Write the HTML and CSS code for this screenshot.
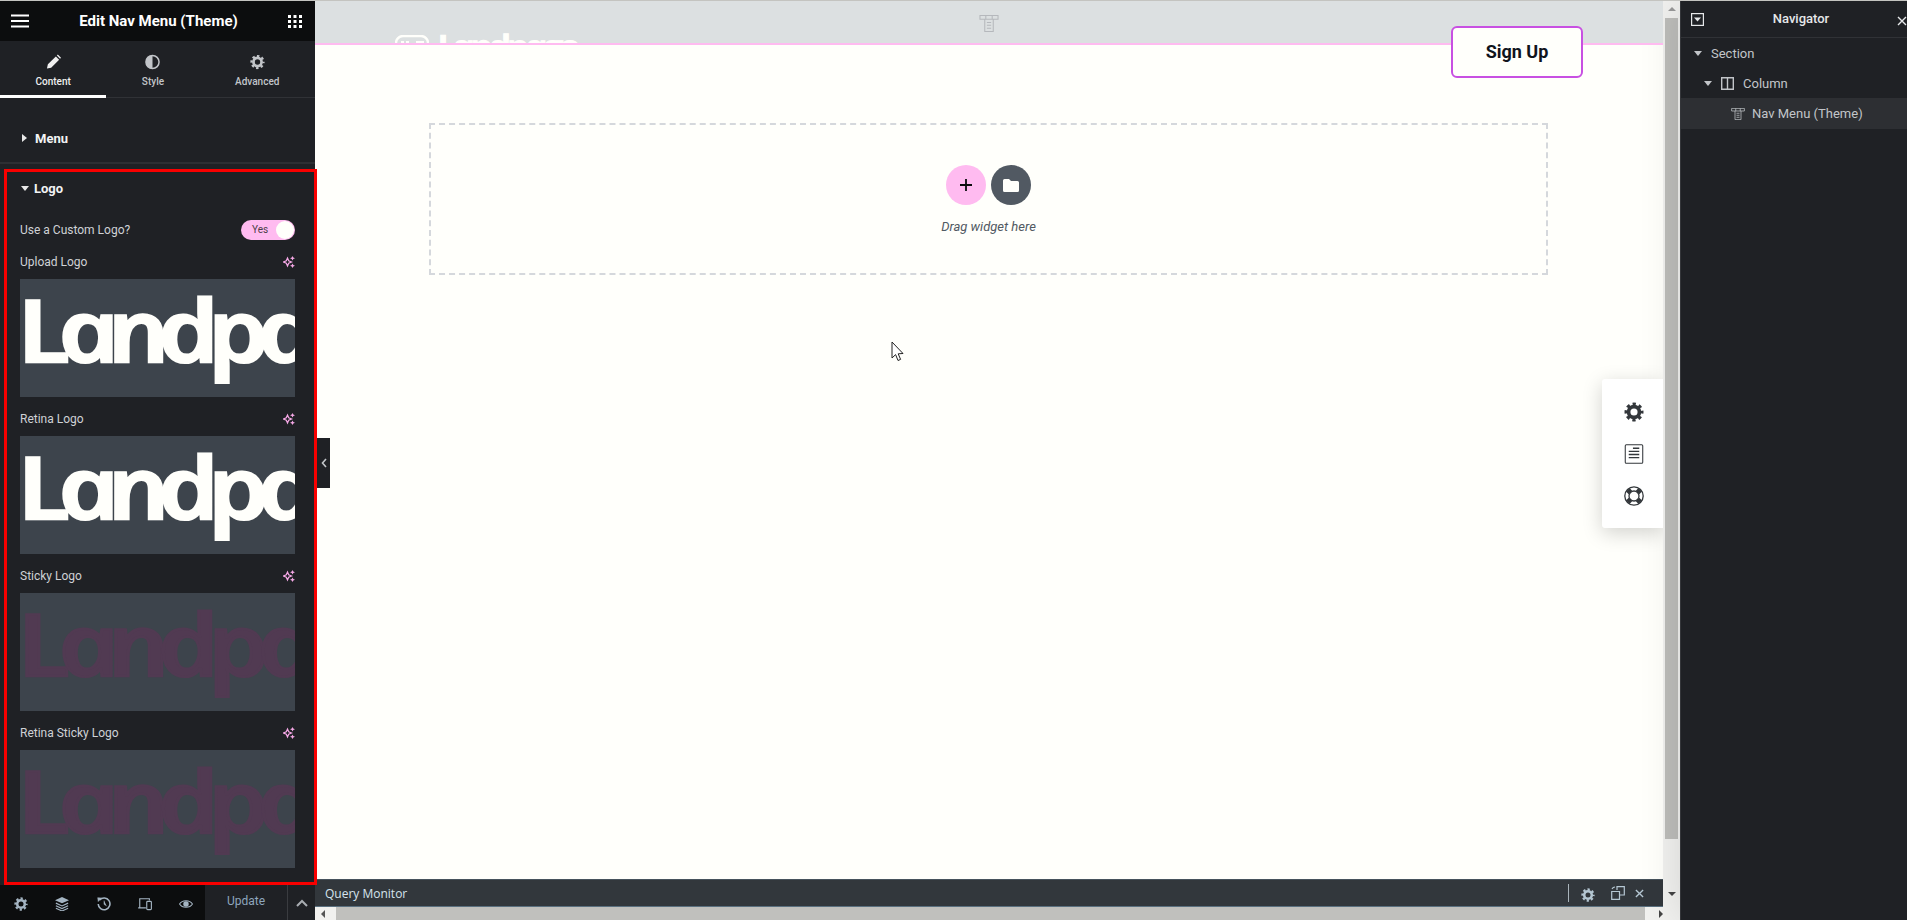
FILE: index.html
```html
<!DOCTYPE html>
<html lang="en">

<head>
    <meta charset="UTF-8">
    <meta name="viewport" content="width=device-width, initial-scale=1.0">
    <title>Edit Nav Menu (Theme)</title>
    <link rel="stylesheet" href="styles.css">
</head>

<body>

    <!-- shared icons -->
    <svg class="sprite" width="0" height="0">
        <symbol id="gear" viewBox="0 0 24 24">
            <circle cx="12" cy="12" r="6.5" fill="none" stroke="currentColor" stroke-width="4.4"></circle>
            <circle cx="12" cy="12" r="9.6" fill="none" stroke="currentColor" stroke-width="3.6" stroke-dasharray="3.9 3.64" stroke-dashoffset="2"></circle>
        </symbol>
        <symbol id="sparkle" viewBox="0 0 12 12">
            <path d="M4.500 2 L5.700 4.800 L8.500 6 L5.700 7.200 L4.500 10 L3.300 7.200 L.5 6 L3.300 4.800 Z" fill="none" stroke="currentColor" stroke-width="1.200"></path>
            <path d="M9.500 0 L10.300 1.600 L12 2.300 L10.300 3 L9.500 4.600 L8.700 3 L7 2.300 L8.700 1.600 Z M9.500 7.400 L10.300 9 L12 9.700 L10.300 10.400 L9.500 12 L8.700 10.400 L7 9.700 L8.700 9 Z" fill="currentColor"></path>
        </symbol>
        <symbol id="nav-menu" viewBox="0 0 18 16">
            <path d="M.5 .5 H17.5 V4 H.5 Z M6 .5 V4 M12 .5 V4 M5 4 V15.5 H13 V4 M7 7 H11 M7 9.7 H11 M7 12.4 H11" fill="none" stroke="currentColor" stroke-width="1"></path>
        </symbol>
    </svg>

    <div class="app">

        <aside class="panel">
            <header class="panel-top">
                <svg class="top-icon" viewBox="0 0 18 14"><path d="M0 1.5 H18 M0 7 H18 M0 12.5 H18" stroke="currentColor" stroke-width="2.2"></path></svg>
                <h1>Edit Nav Menu (Theme)</h1>
                <svg class="top-icon grid-icon" viewBox="0 0 14 13"><path d="M0 0 H3 V3 H0 Z M5.5 0 H8.5 V3 H5.5 Z M11 0 H14 V3 H11 Z M0 5 H3 V8 H0 Z M5.5 5 H8.5 V8 H5.5 Z M11 5 H14 V8 H11 Z M0 10 H3 V13 H0 Z M5.5 10 H8.5 V13 H5.5 Z M11 10 H14 V13 H11 Z" fill="currentColor"></path></svg>
            </header>

            <nav class="tabs">
                <div class="tab active">
                    <svg viewBox="0 0 16 16"><path d="M1 15 L2 10.5 L10.5 2 L14 5.5 L5.5 14 Z M11.6 1 L12.6 0 L16 3.4 L15 4.4 Z" fill="currentColor"></path></svg>
                    <span>Content</span>
                </div>
                <div class="tab">
                    <svg viewBox="0 0 16 16"><circle cx="8" cy="8" r="7" fill="none" stroke="currentColor" stroke-width="1.6"></circle><path d="M8 1 A7 7 0 0 0 8 15 Z" fill="currentColor"></path></svg>
                    <span>Style</span>
                </div>
                <div class="tab">
                    <svg viewBox="0 0 24 24"><use href="#gear"></use></svg>
                    <span>Advanced</span>
                </div>
            </nav>

            <div class="section-title closed"><i class="caret-right"></i>Menu</div>

            <section class="logo-section">
                <div class="section-title"><i class="caret-down"></i>Logo</div>

                <div class="control-row switch-row">
                    <span>Use a Custom Logo?</span>
                    <div class="switch"><span>Yes</span><i></i></div>
                </div>

                <div class="control-row"><span>Upload Logo</span><svg class="ai"><use href="#sparkle"></use></svg></div>
                <div class="logo-preview"><span>Landpage</span></div>

                <div class="control-row"><span>Retina Logo</span><svg class="ai"><use href="#sparkle"></use></svg></div>
                <div class="logo-preview"><span>Landpage</span></div>

                <div class="control-row"><span>Sticky Logo</span><svg class="ai"><use href="#sparkle"></use></svg></div>
                <div class="logo-preview sticky"><span>Landpage</span></div>

                <div class="control-row"><span>Retina Sticky Logo</span><svg class="ai"><use href="#sparkle"></use></svg></div>
                <div class="logo-preview sticky"><span>Landpage</span></div>
            </section>

            <footer class="panel-footer">
                <div class="footer-icons">
                    <svg viewBox="0 0 24 24"><use href="#gear"></use></svg>
                    <svg viewBox="0 0 16 16"><path d="M8 0 L16 3.6 L8 7.2 L0 3.6 Z" fill="currentColor"></path><path d="M1 7 L8 10.2 L15 7 M1 10 L8 13.2 L15 10 M1 12.8 L8 16 L15 12.8" fill="none" stroke="currentColor" stroke-width="1.3"></path></svg>
                    <svg viewBox="0 0 16 16"><path d="M3 3.5 A6.7 6.7 0 1 1 1.4 8" fill="none" stroke="currentColor" stroke-width="1.8"></path><path d="M.8 .8 L5.2 1.2 L1.4 5.2 Z M8 4 V8.4 L11 10.2" fill="currentColor" stroke="currentColor" stroke-width=".6"></path></svg>
                    <svg viewBox="0 0 16 14"><path d="M2 11 V1 H13 V3 M.2 11.5 H9" fill="none" stroke="currentColor" stroke-width="1.3"></path><rect x="10" y="4" width="5.3" height="9.4" rx="1" fill="none" stroke="currentColor" stroke-width="1.3"></rect></svg>
                    <svg viewBox="0 0 18 12"><path d="M.7 6 C4 .4 14 .4 17.3 6 C14 11.6 4 11.6 .7 6 Z" fill="none" stroke="currentColor" stroke-width="1.3"></path><circle cx="9" cy="6" r="3.5" fill="currentColor"></circle></svg>
                </div>
                <div class="update-btn">Update</div>
                <div class="update-more"><svg viewBox="0 0 12 8"><path d="M1 7 L6 2 L11 7" fill="none" stroke="currentColor" stroke-width="2"></path></svg></div>
            </footer>

            <div class="red-outline"></div>
            <div class="collapse-tab"><svg viewBox="0 0 6 10"><path d="M5 1 L1.5 5 L5 9" fill="none" stroke="currentColor" stroke-width="1.6"></path></svg></div>
        </aside>

        <main class="center">
            <div class="stage">
                <div class="site">
                    <div class="site-header">
                        <div class="site-logo">
                            <svg viewBox="0 0 34 25"><rect x="1" y="1" width="32" height="30" rx="7" fill="none" stroke="currentColor" stroke-width="2.400"></rect><path d="M6 6 H9 V9.500 H6 Z M11 6 H14 V9.500 H11 Z M21 6 H29 V9.500 H21 Z" fill="currentColor"></path></svg>
                            <span>Landpage</span>
                        </div>
                        <svg class="widget-handle"><use href="#nav-menu"></use></svg>
                    </div>

                    <a class="signup">Sign Up</a>

                    <div class="drop-area">
                        <div class="drop-buttons">
                            <div class="round-btn add"><svg viewBox="0 0 12 12"><path d="M6 0 V12 M0 6 H12" stroke="currentColor" stroke-width="1.8"></path></svg></div>
                            <div class="round-btn folder"><svg viewBox="0 0 16 13"><path d="M0 1.500 Q0 0 1.500 0 H6 L8 2 H14.500 Q16 2 16 3.500 V11.500 Q16 13 14.500 13 H1.500 Q0 13 0 11.500 Z" fill="currentColor"></path></svg></div>
                        </div>
                        <p>Drag widget here</p>
                    </div>

                    <div class="side-tools">
                        <svg viewBox="0 0 24 24"><use href="#gear"></use></svg>
                        <svg viewBox="0 0 18 19"><rect x=".7" y=".7" width="16.600" height="17.600" rx="1" fill="none" stroke="currentColor" stroke-width="1"></rect><path d="M8 4 H14 M4 7 H14 M4 10 H14 M4 13 H14" stroke="currentColor" stroke-width="1.300"></path></svg>
                        <svg viewBox="0 0 20 20"><circle cx="10" cy="10" r="9.200" fill="none" stroke="currentColor" stroke-width="1.300"></circle><circle cx="10" cy="10" r="5" fill="none" stroke="currentColor" stroke-width="1.300"></circle><path d="M3.800 3.800 L6.400 6.400 M16.200 3.800 L13.600 6.400 M3.800 16.200 L6.400 13.600 M16.200 16.200 L13.600 13.600" stroke="currentColor" stroke-width="5"></path></svg>
                    </div>

                    <svg class="cursor" viewBox="0 0 13 21"><path d="M1 1 V17 L4.600 13.600 L7 19.500 L9.600 18.400 L7.200 12.800 L12 12.500 Z" fill="#fff" stroke="#222" stroke-width="1"></path></svg>
                </div>

                <div class="query-monitor">
                    <span>Query Monitor</span>
                    <div class="qm-icons">
                        <i class="qm-sep"></i>
                        <svg class="qm-gear" viewBox="0 0 24 24"><use href="#gear"></use></svg>
                        <svg class="qm-pop" viewBox="0 0 14 14"><path d="M6 4 V.7 H13.300 V9 H9 M.7 5.500 H8.500 V13.300 H.7 Z M1 3 Q2 1 4 1" fill="none" stroke="currentColor" stroke-width="1.200"></path></svg>
                        <svg class="qm-close" viewBox="0 0 10 10"><path d="M1 1 L9 9 M9 1 L1 9" stroke="currentColor" stroke-width="1.500"></path></svg>
                    </div>
                </div>

                <div class="h-scroll">
                    <i class="arrow-left"></i>
                    <div class="h-thumb"></div>
                    <i class="arrow-right"></i>
                </div>
            </div>

            <div class="v-scroll">
                <i class="arrow-up"></i>
                <div class="v-thumb"></div>
                <i class="arrow-down"></i>
            </div>
        </main>

        <aside class="navigator">
            <header class="nav-head">
                <svg class="nav-toggle" viewBox="0 0 13 13"><rect x=".6" y=".6" width="11.800" height="11.800" fill="none" stroke="currentColor" stroke-width="1.200"></rect><path d="M3 4.500 H10 L6.500 8.500 Z" fill="currentColor"></path></svg>
                <span>Navigator</span>
                <svg class="nav-close" viewBox="0 0 10 10"><path d="M1 1 L9 9 M9 1 L1 9" stroke="currentColor" stroke-width="1.400"></path></svg>
            </header>
            <div class="nav-row level-0"><i class="caret-down"></i><span>Section</span></div>
            <div class="nav-row level-1">
                <i class="caret-down"></i>
                <svg class="col-icon" viewBox="0 0 13 13"><path d="M.7 .7 H12.300 V12.300 H.7 Z M6.500 .7 V12.300" fill="none" stroke="currentColor" stroke-width="1.400"></path></svg>
                <span>Column</span>
            </div>
            <div class="nav-row level-2 selected">
                <svg class="menu-icon"><use href="#nav-menu"></use></svg>
                <span>Nav Menu (Theme)</span>
            </div>
        </aside>

    </div>

</body>

</html>
```

FILE: styles.css
```css
* {
    box-sizing: border-box;
}

html,
body {
    margin: 0;
    height: 100%;
    overflow: hidden;
}

body {
    font-family: Roboto, Arial, sans-serif;
    background-color: #fffffb;
    border-top: 1px solid #c4c4c0;
}

.sprite {
    position: absolute;
}

.app {
    display: flex;
    height: 919px;
}

/* left panel */

.panel {
    position: relative;
    flex: none;
    width: 315px;
    display: flex;
    flex-direction: column;
    background-color: #1f2125;
    color: #d5d8dc;
}

.panel-top {
    height: 40px;
    display: flex;
    align-items: center;
    justify-content: space-between;
    padding: 0 13px 0 11px;
    background-color: #0c0d0e;
    color: #fff;
}

.panel-top h1 {
    margin: 0;
    font-size: 15px;
    font-weight: 700;
}

.top-icon {
    width: 18px;
    height: 14px;
}

.grid-icon {
    width: 14px;
    height: 13px;
}

.tabs {
    height: 57px;
    display: flex;
    border-bottom: 1px solid #303236;
}

.tab {
    display: flex;
    flex-direction: column;
    align-items: center;
    padding: 13px 35.500px 0;
    font-size: 10px;
    font-weight: 500;
    color: #c2c5c9;
    border-bottom: 3px solid transparent;
    margin-bottom: -1px;
}

.tab svg {
    width: 15px;
    height: 16px;
    margin-bottom: 6px;
}

.tab.active {
    color: #f0f0f0;
    border-bottom-color: #fff;
}

.section-title {
    display: flex;
    align-items: center;
    height: 48px;
    padding-left: 21px;
    font-size: 13px;
    font-weight: 700;
    color: #f2f3f4;
}

.section-title.closed {
    height: 66px;
    padding-top: 16px;
    border-bottom: 2px solid #2d2f33;
}

.caret-right {
    width: 0;
    height: 0;
    margin-right: 8px;
    margin-left: 1px;
    border-left: 5px solid #e8e8e8;
    border-top: 4px solid transparent;
    border-bottom: 4px solid transparent;
}

.caret-down {
    width: 0;
    height: 0;
    margin-right: 5px;
    border-top: 5px solid #e8e8e8;
    border-left: 4.500px solid transparent;
    border-right: 4.500px solid transparent;
}

.logo-section {
    flex: 1;
}

.control-row {
    display: flex;
    align-items: center;
    justify-content: space-between;
    height: 16px;
    margin: 14px 20px 9px;
    font-size: 12px;
    color: #cfd2d6;
}

.control-row.switch-row {
    height: 20px;
    margin: 8px 20px 0;
}

.switch {
    position: relative;
    width: 54px;
    height: 20px;
    border-radius: 10px;
    background-color: #ffbbf0;
    color: #4c4048;
    font-size: 10px;
    line-height: 20px;
    padding-left: 11px;
}

.switch i {
    position: absolute;
    top: 1px;
    right: 1px;
    width: 18px;
    height: 18px;
    border-radius: 50%;
    background-color: #fffffb;
}

.ai {
    width: 12px;
    height: 12px;
    color: #f5a8e6;
}

.logo-preview {
    height: 118px;
    margin: 0 20px;
    overflow: hidden;
    background-color: #3d444c;
}

/* the italic gives the single storey "a", skew stands it upright and scale widens it */
.logo-preview span {
    display: block;
    white-space: nowrap;
    font-family: "Open Sans", sans-serif;
    font-style: italic;
    font-size: 86px;
    font-weight: 600;
    letter-spacing: -9.500px;
    line-height: 100px;
    color: #fffffb;
    -webkit-text-stroke: 2.500px;
    transform-origin: 0 70%;
    transform: skewX(14.500deg) scaleX(1.22);
}

.logo-preview.sticky span {
    color: #513a52;
}

.panel-footer {
    height: 35px;
    display: flex;
    align-items: center;
    background-color: #0c0d0e;
    color: #a4b4c2;
}

.footer-icons {
    width: 205px;
    display: flex;
    justify-content: space-between;
    align-items: center;
    padding: 2px 12px 0 14px;
}

.footer-icons svg {
    width: 14px;
    height: 14px;
}

.update-btn {
    width: 83px;
    height: 100%;
    line-height: 33px;
    text-align: center;
    font-size: 12px;
    color: #8ea6bd;
    background-color: #1f2125;
    border-right: 1px solid #3a3c40;
}

.update-more {
    flex: 1;
    height: 100%;
    display: flex;
    align-items: center;
    justify-content: center;
    background-color: #1f2125;
    color: #a9adb2;
}

.update-more svg {
    width: 12px;
    height: 8px;
}

.red-outline {
    position: absolute;
    top: 168px;
    left: 4px;
    width: 313px;
    height: 716px;
    border: 3px solid #f80000;
    pointer-events: none;
}

.collapse-tab {
    position: absolute;
    top: 437px;
    left: 317px;
    width: 13px;
    height: 50px;
    display: flex;
    align-items: center;
    justify-content: center;
    background-color: #1f2125;
    color: #c2c5c9;
}

.collapse-tab svg {
    width: 6px;
    height: 10px;
}

/* canvas */

.center {
    flex: 1;
    display: flex;
    min-width: 0;
}

.stage {
    flex: 1;
    display: flex;
    flex-direction: column;
    min-width: 0;
}

.site {
    position: relative;
    flex: 1;
    overflow: hidden;
}

.site-header {
    position: relative;
    height: 44px;
    overflow: hidden;
    background-color: #dce0e1;
    border-bottom: 2px solid #ffbbf0;
}

.site-logo {
    position: absolute;
    top: 34px;
    left: 80px;
    display: flex;
    align-items: flex-start;
    gap: 9px;
    color: #fffffb;
}

.site-logo svg {
    width: 34px;
    height: 25px;
}

.site-logo span {
    font-family: "Open Sans", sans-serif;
    font-style: italic;
    font-size: 32px;
    font-weight: 600;
    letter-spacing: -3.800px;
    line-height: 30px;
    margin-top: -4px;
    -webkit-text-stroke: 1px;
    transform-origin: 0 70%;
    transform: skewX(14.500deg) scaleX(1.22);
}

.widget-handle {
    position: absolute;
    top: 14px;
    left: 663px;
    width: 22px;
    height: 17px;
    color: #b5b8bc;
}

.signup {
    position: absolute;
    top: 25px;
    left: 1136px;
    width: 132px;
    height: 52px;
    display: flex;
    align-items: center;
    justify-content: center;
    padding-bottom: 2px;
    background-color: #fffffb;
    border: 2px solid #c850e2;
    border-radius: 6px;
    font-size: 18px;
    font-weight: 700;
    color: #10141c;
}

.drop-area {
    height: 152px;
    margin: 78px 115px 0 114px;
    padding-top: 40px;
    border: 2px dashed #d5d8dc;
    text-align: center;
}

.drop-buttons {
    display: flex;
    justify-content: center;
    gap: 5px;
}

.round-btn {
    width: 40px;
    height: 40px;
    border-radius: 50%;
    display: flex;
    align-items: center;
    justify-content: center;
}

.round-btn.add {
    background-color: #ffbbf0;
    color: #0c0d0e;
}

.round-btn.add svg {
    width: 12px;
    height: 12px;
}

.round-btn.folder {
    background-color: #515962;
    color: #fffffb;
}

.round-btn.folder svg {
    width: 16px;
    height: 13px;
}

.drop-area p {
    margin: 14px 0 0;
    font-size: 13px;
    font-style: italic;
    color: #515962;
}

.side-tools {
    position: absolute;
    top: 378px;
    right: 0;
    width: 61px;
    height: 149px;
    display: flex;
    flex-direction: column;
    align-items: center;
    gap: 22px;
    padding: 23px 0 0 2px;
    background-color: #fff;
    border-radius: 3px 0 0 3px;
    box-shadow: 0 5px 20px rgba(0, 0, 0, 0.18);
    color: #33373b;
}

.side-tools svg {
    width: 20px;
    height: 20px;
}

.cursor {
    position: absolute;
    top: 340px;
    left: 576px;
    width: 13px;
    height: 21px;
}

/* query monitor bar */

.query-monitor {
    height: 28px;
    display: flex;
    align-items: center;
    justify-content: space-between;
    padding-left: 10px;
    background-color: #32373c;
    border-top: 1px solid #46525c;
    border-bottom: 1px solid #5a7080;
    font-family: "Open Sans", Arial, sans-serif;
    font-size: 12px;
    color: #d6e4ee;
}

.qm-icons {
    display: flex;
    align-items: center;
    color: #b5c7d3;
    padding-right: 19px;
}

.qm-sep {
    width: 1px;
    height: 18px;
    margin-right: 12px;
    background-color: #a9b4bb;
}

.qm-gear {
    width: 14px;
    height: 14px;
    margin: 3px 16px 0 0;
}

.qm-pop {
    width: 14px;
    height: 14px;
    margin-right: 10px;
}

.qm-close {
    width: 9px;
    height: 9px;
}

.h-scroll {
    height: 13px;
    display: flex;
    align-items: center;
    background-color: #f1f1ef;
}

.h-thumb {
    width: 1309px;
    height: 100%;
    margin: 0 10px 0 11px;
    background-color: #c0c0bd;
}

.arrow-left,
.arrow-right,
.arrow-up,
.arrow-down {
    width: 0;
    height: 0;
    flex: none;
}

.arrow-left {
    margin-left: 6px;
    border-right: 4px solid #555;
    border-top: 4px solid transparent;
    border-bottom: 4px solid transparent;
}

.arrow-right {
    margin-left: 4px;
    border-left: 4px solid #444;
    border-top: 4px solid transparent;
    border-bottom: 4px solid transparent;
}

.v-scroll {
    flex: 0 0 17px;
    display: flex;
    flex-direction: column;
    align-items: center;
    background-color: #f1f1ef;
}

.v-thumb {
    width: 13px;
    height: 821px;
    margin-top: 7px;
    background-color: #bdbdba;
}

.arrow-up {
    margin-top: 6px;
    border-bottom: 4px solid #999;
    border-left: 4px solid transparent;
    border-right: 4px solid transparent;
}

.arrow-down {
    margin-top: 53px;
    border-top: 4px solid #444;
    border-left: 4px solid transparent;
    border-right: 4px solid transparent;
}

/* navigator */

.navigator {
    flex: 0 0 227px;
    overflow: hidden;
    background-color: #1f2125;
    border-left: 1px solid #34363a;
    color: #c2c5c9;
    font-size: 13px;
    box-shadow: 0 0 40px rgba(0, 0, 0, 0.12);
}

.nav-head {
    position: relative;
    height: 37px;
    display: flex;
    align-items: center;
    justify-content: center;
    padding: 0 0 2px 14px;
    border-bottom: 1px solid #303236;
    color: #e6e8ea;
    font-weight: 500;
}

.nav-toggle {
    position: absolute;
    left: 10px;
    top: 12px;
    width: 13px;
    height: 13px;
}

.nav-close {
    position: absolute;
    left: 216px;
    top: 15px;
    width: 10px;
    height: 10px;
}

.nav-row {
    height: 30px;
    display: flex;
    align-items: center;
}

.nav-row .caret-down {
    border-top-color: #c2c5c9;
    margin-right: 9px;
}

.nav-row.level-0 {
    padding-left: 13px;
}

.nav-row.level-1 {
    padding-left: 23px;
}

.nav-row.level-2 {
    padding-left: 50px;
    height: 31px;
}

.nav-row.selected {
    background-color: #2d2f33;
}

.col-icon {
    width: 13px;
    height: 13px;
    margin-right: 9px;
}

.menu-icon {
    width: 14px;
    height: 12px;
    margin-right: 7px;
}
```
